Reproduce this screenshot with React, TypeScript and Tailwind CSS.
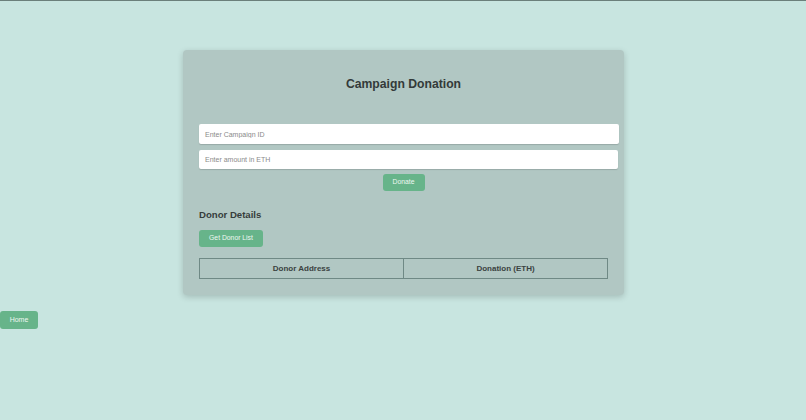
export default function App() {
  return (
    <div
      className="min-h-[420px] border-t border-[#6b7f7b] bg-[#c8e5e0] pt-[49px]"
      style={{ fontFamily: '"Liberation Sans", Arial, sans-serif' }}
    >
      {/* Card */}
      <div className="ml-[183px] w-[441px] rounded-[4px] bg-[#b1c7c3] px-4 pt-[27px] pb-[16px] shadow-[0_2px_6px_rgba(0,0,0,0.18)]">
        <h2 className="text-center text-[12.2px] font-bold leading-[14px] text-[#333a39]">Campaign Donation</h2>

        <div className="mt-[33px] flex flex-col gap-[6px]">
          <input
            className="h-[20px] w-[420px] rounded-[2px] bg-white px-[6px] text-[7px] text-[#555] shadow-[0_1px_1px_rgba(0,0,0,0.15)] outline-none placeholder:text-[#8a8a8a]"
            placeholder="Enter Campaign ID"
          />
          <input
            className="h-[19px] w-[419px] rounded-[2px] bg-white px-[6px] text-[7px] text-[#555] shadow-[0_1px_1px_rgba(0,0,0,0.15)] outline-none placeholder:text-[#8a8a8a]"
            placeholder="Enter amount in ETH"
          />
        </div>

        <div className="mt-[5px] flex justify-center">
          <button className="h-[17px] w-[42px] rounded-[3px] bg-[#67b48a] text-[6.8px] text-[#eef7f1]">Donate</button>
        </div>

        <h3 className="mt-[18px] text-[9.6px] font-bold leading-[12px] text-[#363d3c]">Donor Details</h3>

        <button className="mt-[9px] h-[17px] w-[64px] rounded-[3px] bg-[#67b48a] text-[6.8px] text-[#eef7f1]">
          Get Donor List
        </button>

        <table className="mt-[11px] w-full border-collapse">
          <thead>
            <tr>
              <th className="h-[20px] w-1/2 border border-[#6f8985] text-center text-[8px] font-bold text-[#3a4241]">
                Donor Address
              </th>
              <th className="h-[20px] w-1/2 border border-[#6f8985] text-center text-[8px] font-bold text-[#3a4241]">
                Donation (ETH)
              </th>
            </tr>
          </thead>
        </table>
      </div>

      <button className="mt-[16px] h-[18px] w-[38px] rounded-[3px] bg-[#67b48a] text-[7px] text-[#eef7f1]">Home</button>
    </div>
  );
}
